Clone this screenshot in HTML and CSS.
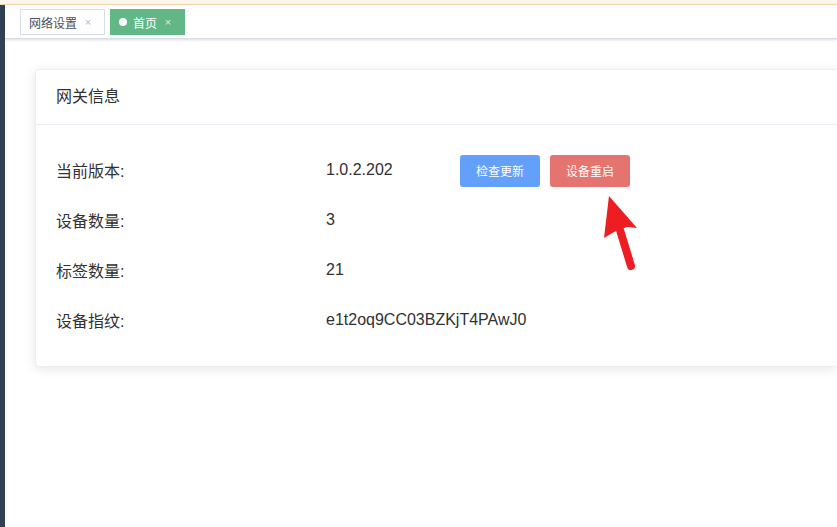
FILE: index.html
```html
<!DOCTYPE html>
<html>
<head>
  <title>网络设置</title>
  <meta charset="utf-8">
  <link rel="stylesheet" href="styles.css">
</head>
<body>
  <div class="topline"></div>
  <div class="layout">
    <div class="sidebar"></div>
    <div class="main">
      <div class="tags">
        <span class="tag">网络设置<span class="close">×</span></span>
        <span class="tag active"><span class="dot"></span>首页<span class="close">×</span></span>
      </div>
      <div class="content">
        <div class="card">
          <div class="card-header">网关信息</div>
          <div class="card-body">
            <div class="row">
              <div class="label">当前版本:</div>
              <div class="value version">1.0.2.202</div>
              <div class="actions">
                <button class="btn btn-primary">检查更新</button>
                <button class="btn btn-danger">设备重启</button>
                <svg class="arrow" width="40" height="80" viewBox="0 0 40 80">
                  <path d="M9 6 L4 48 L14 42 Z M9 6 L37 38 L27 37 Z M9 6 L14 42 L27 37 Z" fill="#ee1d24"/>
                  <line x1="20" y1="40" x2="31" y2="76" stroke="#ee1d24" stroke-width="8" stroke-linecap="round"/>
                </svg>
              </div>
            </div>
            <div class="row">
              <div class="label">设备数量:</div>
              <div class="value">3</div>
            </div>
            <div class="row">
              <div class="label">标签数量:</div>
              <div class="value">21</div>
            </div>
            <div class="row">
              <div class="label">设备指纹:</div>
              <div class="value">e1t2oq9CC03BZKjT4PAwJ0</div>
            </div>
          </div>
        </div>
      </div>
    </div>
  </div>
</body>
</html>
```

FILE: styles.css
```css
body {
  margin: 0;
  font-family: "Liberation Sans", Arial, "Noto Sans CJK SC", sans-serif;
  color: #303133;
  background: #fff;
  overflow: hidden;
}

.topline {
  height: 4px;
  background: #fdf6ec;
  border-bottom: 1px solid #f5dab1;
}

.layout {
  display: flex;
  height: 522px;
}

.sidebar {
  width: 5px;
  background: #304156;
}

.main {
  flex: 1;
  min-width: 0;
}

.tags {
  height: 33px;
  display: flex;
  align-items: center;
  gap: 5px;
  padding-left: 15px;
  background: #fff;
  border-bottom: 1px solid #d8dce5;
  box-shadow: 0 1px 3px 0 rgba(0,0,0,.12), 0 0 3px 0 rgba(0,0,0,.04);
  position: relative;
}

.tag {
  display: inline-flex;
  align-items: center;
  height: 24px;
  padding: 0 8px;
  font-size: 12px;
  color: #495060;
  background: #fff;
  border: 1px solid #d8dce5;
  margin-top: 1px;
}

.tag.active {
  background: #62b786;
  border-color: #62b786;
  color: #fff;
}

.dot {
  width: 8px;
  height: 8px;
  border-radius: 50%;
  background: #fff;
  margin-right: 6px;
}

.close {
  display: inline-block;
  width: 16px;
  text-align: center;
  font-size: 11px;
  margin-left: 3px;
  color: #b4b8c0;
}

.tag.active .close {
  color: #d8efe1;
}

.content {
  padding: 30px 0 0 30px;
}

.card {
  background: #fff;
  border: 1px solid #ebeef5;
  border-right: none;
  border-radius: 4px 0 0 4px;
  box-shadow: 0 2px 12px 0 rgba(0,0,0,.1);
  height: 296px;
}

.card-header {
  padding: 0 20px;
  height: 54px;
  line-height: 54px;
  font-size: 16px;
  border-bottom: 1px solid #ebeef5;
}

.card-body {
  padding: 20px 20px;
}

.row {
  display: flex;
  align-items: center;
  height: 50px;
  font-size: 16px;
}

.label {
  width: 270px;
}

.value {
  color: #303133;
}

.version {
  width: 134px;
}

.actions {
  display: flex;
  gap: 10px;
  position: relative;
  margin-top: 1px;
}

.btn {
  width: 80px;
  height: 32px;
  border: none;
  border-radius: 3px;
  color: #fff;
  font-size: 12px;
  font-family: inherit;
  padding: 0;
}

.btn-primary {
  background: #63a0fb;
}

.btn-danger {
  background: #e5736f;
}

.arrow {
  position: absolute;
  left: 140px;
  top: 35px;
}
```
